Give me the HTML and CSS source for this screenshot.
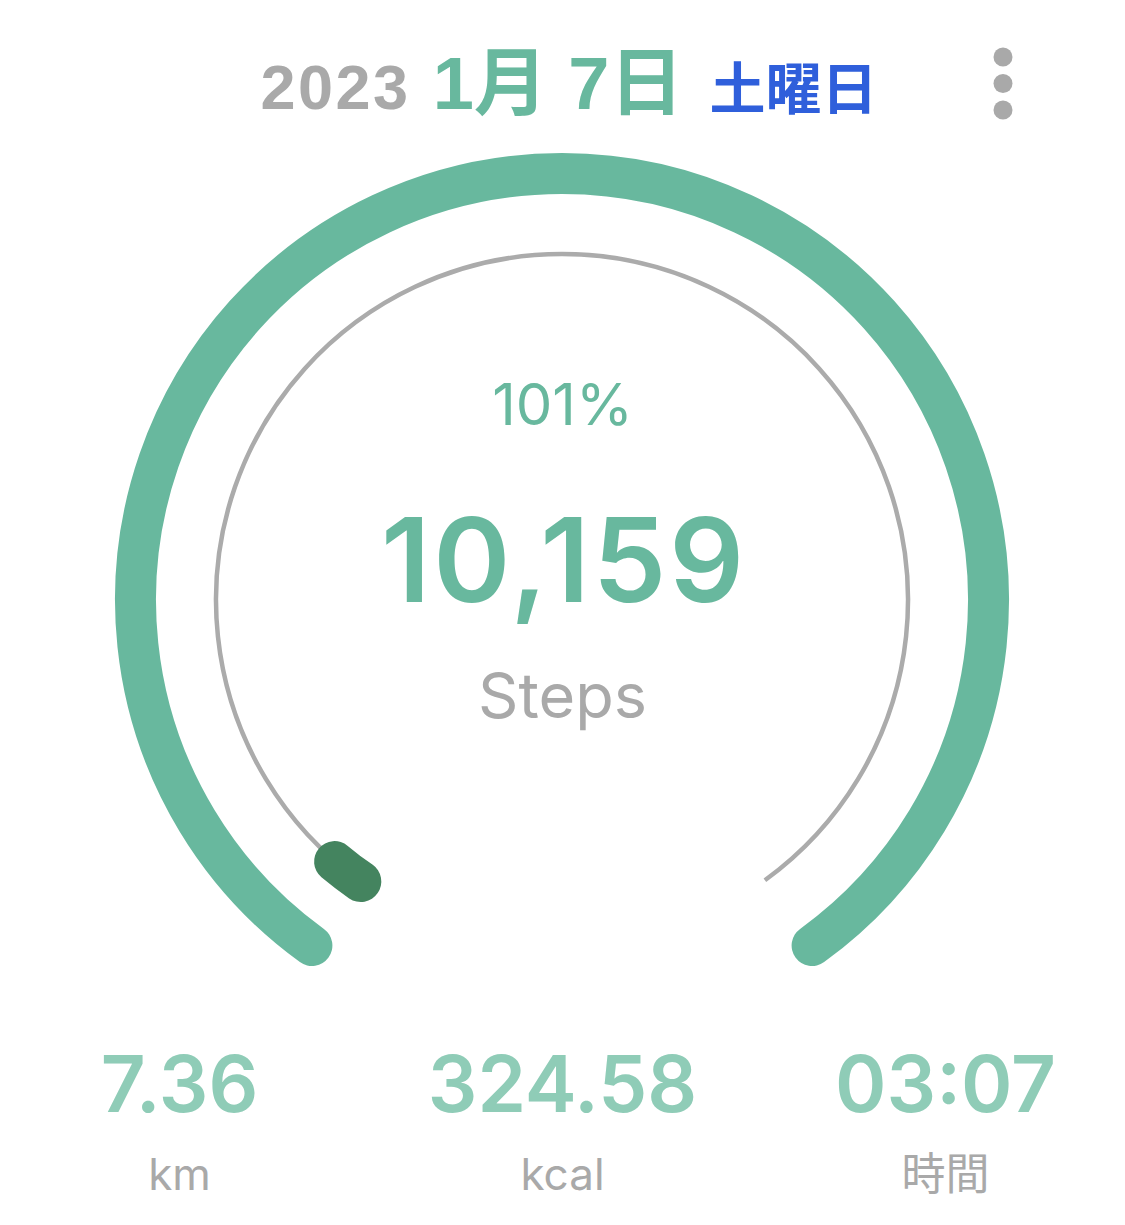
FILE: index.html
```html
<!DOCTYPE html>
<html lang="ja">
<head>
<meta charset="utf-8">
<title>Steps</title>
<link rel="stylesheet" href="styles.css">
</head>
<body>
<div class="page">
  <header class="header">
    <div class="spacer"></div>
    <div class="date">
      <span class="year">2023</span>
      <span class="md">1月 7日</span>
      <span class="dow">土曜日</span>
    </div>
    <div class="menu-cell">
      <svg class="kebab" width="20" height="74" viewBox="0 0 20 74" aria-label="menu">
        <circle cx="10" cy="10" r="9.5" fill="#a9a9a9"/>
        <circle cx="10" cy="36.5" r="9.5" fill="#a9a9a9"/>
        <circle cx="10" cy="63" r="9.5" fill="#a9a9a9"/>
      </svg>
    </div>
  </header>

  <section class="gauge">
    <svg class="gauge-svg" width="1125" height="850" viewBox="0 150 1125 850">
      <path d="M 311.9 945.5 A 426.5 426.5 0 1 1 812.1 945.5" fill="none" stroke="#68b89e" stroke-width="41" stroke-linecap="round"/>
      <path d="M 359.1 880.3 A 346 346 0 1 1 764.9 880.3" fill="none" stroke="#ababab" stroke-width="4.5"/>
      <path d="M 360.8 881.5 A 346 346 0 0 1 334.6 861.6" fill="none" stroke="#44845f" stroke-width="41" stroke-linecap="round"/>
    </svg>
    <div class="gauge-text">
      <div class="pct">101%</div>
      <div class="steps">10,159</div>
      <div class="steps-label">Steps</div>
    </div>
  </section>

  <section class="stats">
    <div class="stat">
      <div class="stat-value">7.36</div>
      <div class="stat-label">km</div>
    </div>
    <div class="stat">
      <div class="stat-value">324.58</div>
      <div class="stat-label">kcal</div>
    </div>
    <div class="stat">
      <div class="stat-value">03:07</div>
      <div class="stat-label">時間</div>
    </div>
  </section>
</div>
</body>
</html>
```

FILE: styles.css
```css
html, body {
  margin: 0;
  padding: 0;
  background: #ffffff;
}

.page {
  width: 1125px;
  height: 1225px;
  overflow: hidden;
  font-family: Inter, "Noto Sans CJK JP", sans-serif;
}

.header {
  display: grid;
  grid-template-columns: 1fr auto 1fr;
  align-items: start;
  height: 150px;
}

.date {
  display: flex;
  align-items: baseline;
  margin-top: 47px;
  margin-left: 13px;
  font-family: "Liberation Sans", "Noto Sans CJK JP", sans-serif;
  font-weight: 700;
  line-height: 1;
  white-space: nowrap;
}

.year {
  font-size: 63px;
  color: #a9a9a9;
  letter-spacing: 2.5px;
}

.md {
  font-size: 74px;
  color: #68b89e;
  margin-left: 22px;
}

.dow {
  font-size: 56px;
  color: #2f5fdb;
  margin-left: 26px;
  font-family: "Noto Sans CJK JP", sans-serif;
}

.menu-cell {
  display: flex;
  justify-content: flex-end;
  padding-right: 112px;
  padding-top: 47px;
}

.kebab {
  display: block;
}

.gauge {
  display: grid;
  height: 850px;
}

.gauge-svg {
  grid-area: 1 / 1;
  display: block;
}

.gauge-text {
  grid-area: 1 / 1;
  display: flex;
  flex-direction: column;
  align-items: center;
  padding-top: 225px;
  line-height: 1;
}

.pct {
  font-size: 58px;
  font-weight: 400;
  color: #68b89e;
}

.steps {
  margin-top: 68px;
  padding-left: 3px;
  font-size: 117px;
  font-weight: 600;
  color: #68b89e;
  letter-spacing: 3px;
}

.steps-label {
  margin-top: 46px;
  font-size: 63px;
  font-weight: 400;
  color: #a9a9a9;
}

.stats {
  display: grid;
  grid-template-columns: repeat(3, 383px);
  margin: 0 -12px;
  padding-top: 45px;
}

.stat {
  display: flex;
  flex-direction: column;
  align-items: center;
  line-height: 1;
}

.stat-value {
  font-size: 78px;
  font-weight: 600;
  color: #8fccb7;
}

.stat-label {
  margin-top: 29px;
  font-size: 44px;
  font-weight: 400;
  color: #a9a9a9;
}
```
